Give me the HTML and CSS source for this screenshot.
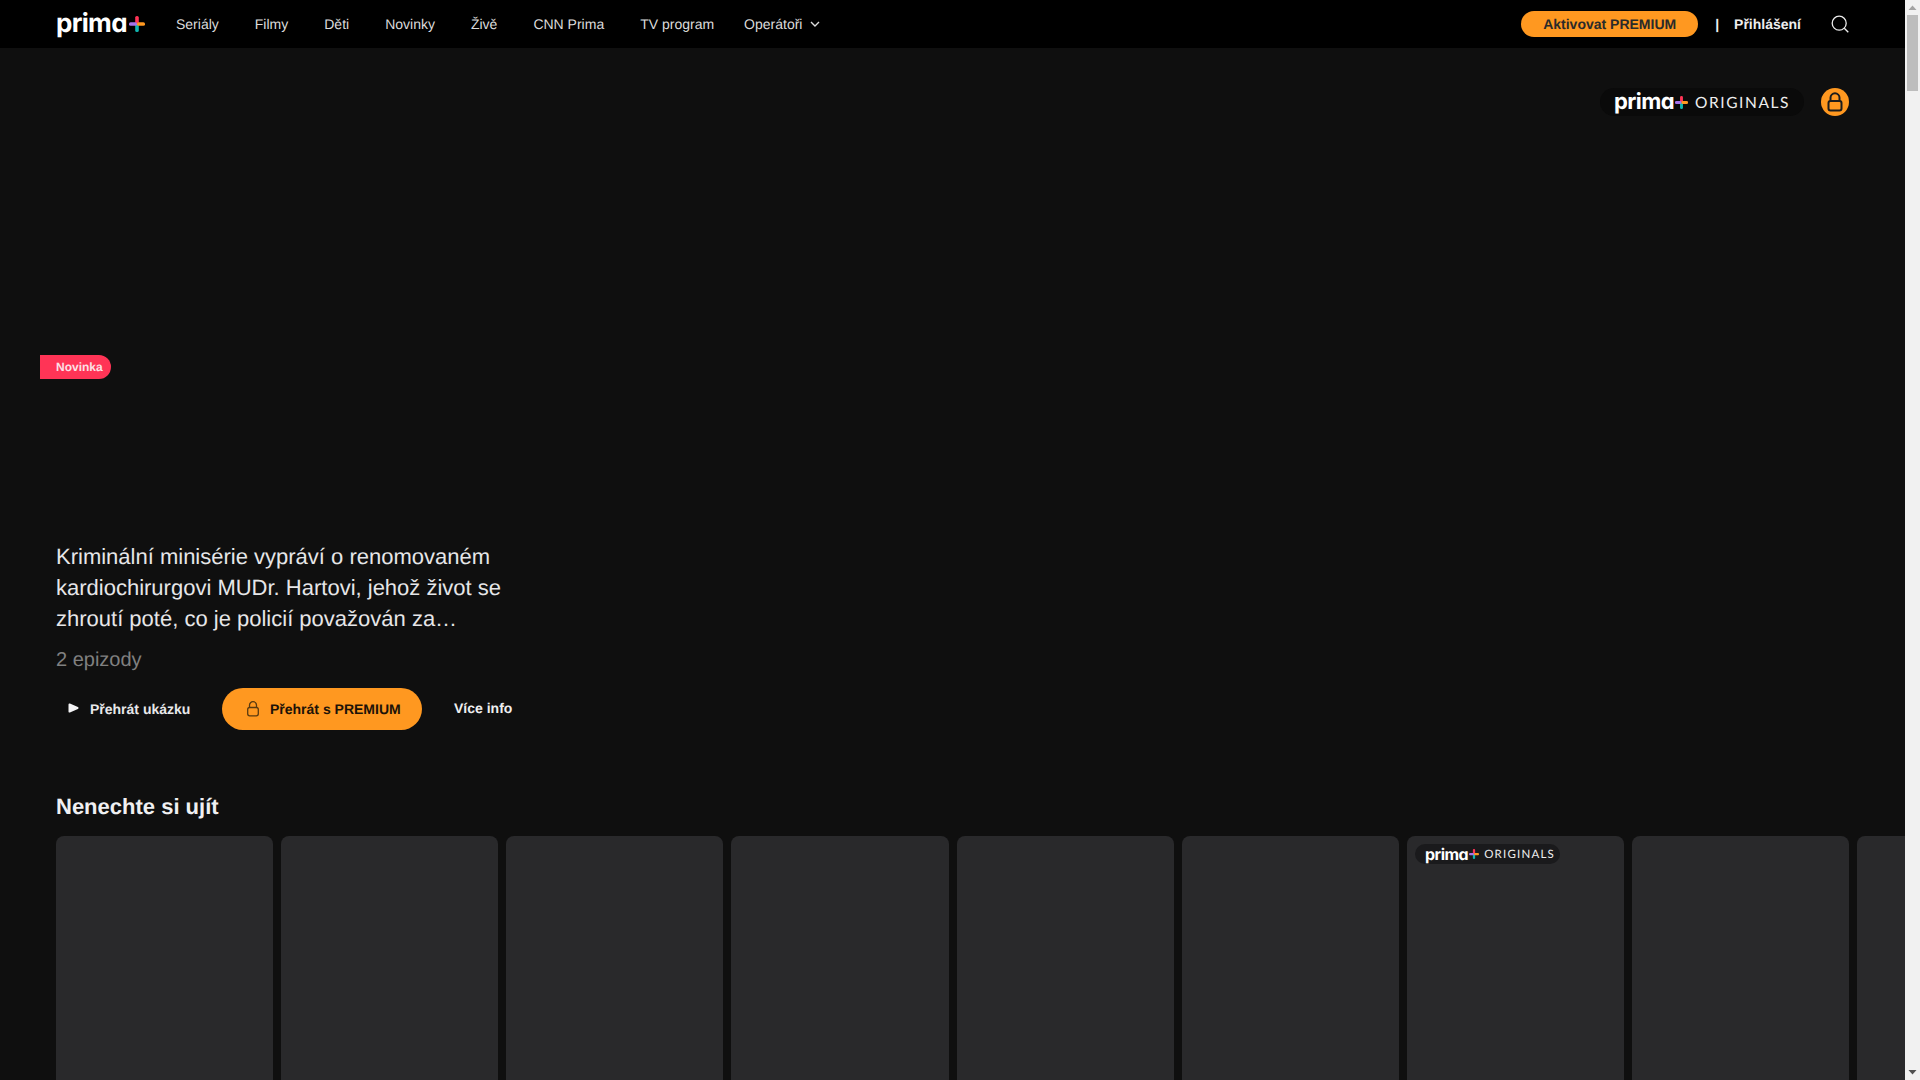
FILE: index.html
```html
<!DOCTYPE html>
<html lang="cs">
<head>
<meta charset="utf-8">
<title>prima+</title>
<link rel="stylesheet" href="styles.css">
</head>
<body>
<div class="viewport">
<header class="topbar">
  <a class="logo logo-main"><span class="logo-word">prima</span><svg class="plus" viewBox="0 0 16 16"><rect x="6.2" y="0" width="3.6" height="8" rx="1.6" fill="#ff3456"/><rect x="6.2" y="8" width="3.6" height="8" rx="1.6" fill="#10b5b0"/><rect x="0" y="6.2" width="8" height="3.6" rx="1.6" fill="#a673ea"/><rect x="8" y="6.2" width="8" height="3.6" rx="1.6" fill="#ff9820"/></svg></a>
  <nav class="nav">
    <a>Seriály</a><a>Filmy</a><a>Děti</a><a>Novinky</a><a>Živě</a><a>CNN Prima</a><a>TV program</a>
    <a class="nav-drop">Operátoři<svg class="chev" viewBox="0 0 10 6"><path d="M1 1l4 4 4-4" fill="none" stroke="#ddd" stroke-width="1.4"/></svg></a>
  </nav>
  <div class="top-right">
    <a class="activate">Aktivovat PREMIUM</a>
    <span class="sep">|</span>
    <a class="login">Přihlášení</a>
    <svg class="search" viewBox="0 0 18 18"><circle cx="8.2" cy="8.2" r="7" fill="none" stroke="#eee" stroke-width="1.3"/><path d="M13.3 13.3l4 4" stroke="#eee" stroke-width="1.3"/></svg>
  </div>
</header>
<main class="page">
  <section class="hero">
    <div class="hero-tags">
      <div class="orig-pill"><span class="logo"><span class="logo-word">prima</span><svg class="plus" viewBox="0 0 16 16"><rect x="6.2" y="0" width="3.6" height="8" rx="1.6" fill="#ff3456"/><rect x="6.2" y="8" width="3.6" height="8" rx="1.6" fill="#10b5b0"/><rect x="0" y="6.2" width="8" height="3.6" rx="1.6" fill="#a673ea"/><rect x="8" y="6.2" width="8" height="3.6" rx="1.6" fill="#ff9820"/></svg></span><span class="orig-word">ORIGINALS</span></div>
      <div class="lock-round"><svg viewBox="0 0 28 28"><path d="M9.5 13v-3.2a4.5 4.5 0 0 1 9 0V13" fill="none" stroke="#1c1c1c" stroke-width="2"/><rect x="7.500" y="13" width="13" height="9.500" rx="2" fill="none" stroke="#1c1c1c" stroke-width="2"/></svg></div>
    </div>
    <div class="badge">Novinka</div>
    <p class="desc">Kriminální minisérie vypráví o renomovaném kardiochirurgovi MUDr. Hartovi, jehož život se zhroutí poté, co je policií považován za…</p>
    <p class="eps">2 epizody</p>
    <div class="actions">
      <a class="btn-ghost"><svg class="play" viewBox="0 0 11 10"><path d="M1.500 1.500L9.500 5l-8 3.500z" fill="#f4f4f6" stroke="#f4f4f6" stroke-width="2" stroke-linejoin="round"/></svg>Přehrát ukázku</a>
      <a class="btn-premium"><svg class="lock" viewBox="0 0 14 16"><path d="M3.500 6.500V4.200a3.500 3.500 0 0 1 7 0v2.300" fill="none" stroke="#5a3a10" stroke-width="1.300"/><rect x="1.700" y="6.500" width="10.600" height="8.300" rx="2" fill="none" stroke="#5a3a10" stroke-width="1.300"/></svg>Přehrát s PREMIUM</a>
      <a class="more">Více info</a>
    </div>
  </section>
  <section class="row">
    <h2 class="row-title">Nenechte si ujít</h2>
    <div class="cards">
      <div class="card"></div><div class="card"></div><div class="card"></div><div class="card"></div><div class="card"></div><div class="card"></div>
      <div class="card"><div class="card-pill"><span class="logo logo-small"><span class="logo-word">prima</span><svg class="plus" viewBox="0 0 16 16"><rect x="6.2" y="0" width="3.6" height="8" rx="1.6" fill="#ff3456"/><rect x="6.2" y="8" width="3.6" height="8" rx="1.6" fill="#10b5b0"/><rect x="0" y="6.2" width="8" height="3.6" rx="1.6" fill="#a673ea"/><rect x="8" y="6.2" width="8" height="3.6" rx="1.6" fill="#ff9820"/></svg></span><span class="orig-word orig-small">ORIGINALS</span></div></div>
      <div class="card"></div><div class="card"></div>
    </div>
  </section>
</main>
</div>
<aside class="scrollbar">
  <svg class="sb-arrow" viewBox="0 0 15 15"><path d="M7.500 5.500l4 4.500h-8z" fill="#a3a3a3"/></svg>
  <div class="sb-track"><div class="sb-thumb"></div></div>
  <svg class="sb-arrow" viewBox="0 0 15 15"><path d="M3.500 5h8l-4 4.500z" fill="#505050"/></svg>
</aside>
</body>
</html>
```
FILE: styles.css
```css
* { box-sizing: border-box; }
html, body { margin: 0; padding: 0; height: 100%; overflow: hidden; }
body {
  display: flex;
  background: #0f0f0f;
  color: #f0f0f2;
  font-family: "Liberation Sans", Arial, sans-serif;
  text-rendering: geometricPrecision;
}
a { display: block; }
.viewport { flex: 1 1 auto; min-width: 0; height: 100%; overflow: hidden; }

.scrollbar { flex: 0 0 15px; height: 100%; background: #f1f1f1; display: flex; flex-direction: column; }
.sb-arrow { display: block; width: 15px; height: 15px; flex: none; }
.sb-track { flex: 1 1 auto; padding: 0 2px; }
.sb-thumb { height: 76px; background: #bdbdbd; }

.topbar {
  height: 48px;
  background: #000;
  display: flex;
  align-items: center;
  padding: 0 56px;
}
.logo { display: flex; align-items: center; font-family: Inter, "Liberation Sans", sans-serif; color: #fff; }
.logo-word { font-weight: 700; font-size: 26px; line-height: 1; letter-spacing: -.7px; font-feature-settings: "cv11" 1; }
.logo .plus { width: 16px; height: 16px; margin-left: 2px; display: block; }
.logo-main { width: 120px; }

.nav { display: flex; align-items: center; gap: 36px; font-size: 14px; color: #dcdcdc; }
.nav-drop { display: flex; align-items: center; gap: 8px; margin-left: -6px; }
.chev { width: 10px; height: 6px; margin-top: -1px; }

.top-right { margin-left: auto; display: flex; align-items: center; font-size: 14px; font-weight: 700; }
.activate {
  width: 177px; height: 26px; line-height: 26px; text-align: center;
  background: #ff9820; color: #2a2a2a; border-radius: 13px;
}
.sep { margin-left: 17px; color: #eee; }
.login { margin-left: 15px; color: #eee; }
.search { width: 18px; height: 18px; margin-left: 30px; }

.hero { padding: 0 56px; }
.hero-tags { display: flex; justify-content: flex-end; gap: 17px; padding-top: 40px; }
.orig-pill {
  width: 204px; height: 28px; border-radius: 14px; background: #0a0a0a;
  display: flex; align-items: center; padding-left: 14px;
}
.orig-pill .logo-word { font-size: 22px; letter-spacing: -.6px; }
.orig-pill .plus { width: 13px; height: 13px; margin-left: 1px; }
.orig-word {
  font-family: Lato, "Noto Sans", sans-serif; font-size: 15.5px; letter-spacing: 1.6px; color: #eee; margin: 2px 0 0 7px;
}
.lock-round { width: 28px; height: 28px; border-radius: 50%; background: #ff9820; }
.lock-round svg { display: block; width: 28px; height: 28px; }

.badge {
  width: 71px; height: 24px; margin: 239px 0 0 -16px; padding-left: 16px;
  background: #ff3456; color: #fbe0e6; font-size: 12px; font-weight: 700; line-height: 24px;
  border-radius: 0 12px 12px 0;
}
.desc { width: 470px; margin: 162px 0 0; font-size: 22px; line-height: 31px; color: #e6e6e8; }
.eps { margin: 13px 0 0; font-size: 20px; line-height: 26px; color: #808080; }
.actions { display: flex; align-items: center; margin-top: 15px; height: 42px; font-size: 14px; font-weight: 700; }
.btn-ghost { display: flex; align-items: center; width: 166px; padding-left: 12px; color: #e8e8ea; }
.play { width: 11px; height: 10px; margin-right: 11px; margin-top: -2px; }
.btn-premium {
  display: flex; align-items: center; width: 200px; height: 42px; padding-left: 24px;
  background: #ff9820; color: #1c1308; border-radius: 21px;
}
.lock { width: 14px; height: 16px; margin-right: 10px; }
.more { margin-left: 32px; margin-bottom: 2px; color: #eeeef0; }

.row { padding-left: 56px; margin-top: 61px; }
.row-title { margin: 0; font-size: 22px; line-height: 32px; font-weight: 700; color: #f0f0f2; }
.cards { display: flex; gap: 8px; margin-top: 13px; overflow: hidden; }
.card { flex: 0 0 217.16px; height: 326px; background: #29292b; border-radius: 8px; padding: 8px; }
.card-pill {
  width: 145px; height: 20px; border-radius: 10px; background: #1a1a1c;
  display: flex; align-items: center; padding-left: 10px;
}
.logo-small .logo-word { font-size: 16px; letter-spacing: -.5px; }
.logo-small .plus { width: 10px; height: 10px; margin-left: 1px; }
.orig-small { font-size: 11.5px; letter-spacing: 1.2px; margin: 1px 0 0 5px; }
```
